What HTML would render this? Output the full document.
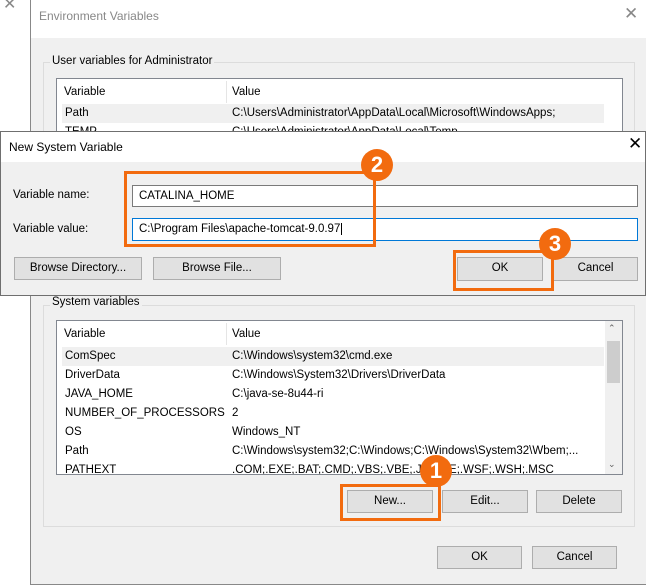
<!DOCTYPE html>
<html><head><meta charset="utf-8"><style>
*{box-sizing:border-box;margin:0;padding:0}
body{width:646px;height:585px;position:relative;overflow:hidden;background:#fff;font-family:"Liberation Sans",sans-serif;font-size:11.5px;color:#000}
.a{position:absolute}
.btn{position:absolute;background:#e1e1e1;border:1px solid #adadad;text-align:center;line-height:21px;font-size:11.5px}
.inp{position:absolute;background:#fff;border:1px solid #7a7a7a;padding-left:6px;line-height:20px;font-size:11.5px}
.orange{position:absolute;border:3px solid #f26b0f}
.circ{position:absolute;width:32px;height:32px;border-radius:50%;background:#f26b0f;color:#fff;font-weight:bold;font-size:22px;text-align:center;line-height:32px}
.row{position:absolute;left:0;width:549px;height:19px;line-height:19px}
.row span{position:absolute}
</style></head><body>
<div class="a" style="left:3px;top:-6px;font-size:16px;color:#888">✕</div>
<!-- outer dialog -->
<div class="a" style="left:30px;top:0;width:620px;height:585px;background:#f0f0f0;border-left:1px solid #888;border-bottom:1px solid #888"></div>
<div class="a" style="left:31px;top:0;width:615px;height:38px;background:#fff"></div>
<div class="a" style="left:39px;top:9px;color:#888;font-size:12px">Environment Variables</div>
<div class="a" style="left:624px;top:4px;color:#888;font-size:17px">✕</div>
<!-- user group -->
<div class="a" style="left:43px;top:62px;width:592px;height:100px;border:1px solid #dcdcdc"></div>
<div class="a" style="left:50px;top:55px;background:#f0f0f0;padding:0 2px;font-size:11.5px">User variables for Administrator</div>
<div class="a" style="left:56px;top:78px;width:567px;height:70px;background:#fff;border:1px solid #828790">
 <div class="a" style="left:7px;top:7px">Variable</div>
 <div class="a" style="left:169px;top:2px;width:1px;height:22px;background:#e5e5e5"></div>
 <div class="a" style="left:175px;top:7px">Value</div>
 <div class="a" style="left:5px;top:25px;width:542px;height:19px;background:#f0f0f0"></div>
 <div class="a" style="left:8px;top:28px">Path</div>
 <div class="a" style="left:175px;top:28px">C:\Users\Administrator\AppData\Local\Microsoft\WindowsApps;</div>
 <div class="a" style="left:8px;top:47px">TEMP</div>
 <div class="a" style="left:175px;top:47px">C:\Users\Administrator\AppData\Local\Temp</div>
</div>
<!-- system group -->
<div class="a" style="left:43px;top:305px;width:592px;height:222px;border:1px solid #dcdcdc"></div>
<div class="a" style="left:50px;top:296px;background:#f0f0f0;padding:0 2px">System variables</div>
<div class="a" style="left:56px;top:320px;width:567px;height:155px;background:#fff;border:1px solid #828790;overflow:hidden">
 <div class="a" style="left:7px;top:7px">Variable</div>
 <div class="a" style="left:169px;top:2px;width:1px;height:22px;background:#e5e5e5"></div>
 <div class="a" style="left:175px;top:7px">Value</div>
 <div class="row" style="top:26px;left:5px;width:542px;background:#f0f0f0"></div>
 <div class="row" style="top:26px"><span style="left:8px">ComSpec</span><span style="left:175px">C:\Windows\system32\cmd.exe</span></div>
 <div class="row" style="top:45px"><span style="left:8px">DriverData</span><span style="left:175px">C:\Windows\System32\Drivers\DriverData</span></div>
 <div class="row" style="top:64px"><span style="left:8px">JAVA_HOME</span><span style="left:175px">C:\java-se-8u44-ri</span></div>
 <div class="row" style="top:83px"><span style="left:8px">NUMBER_OF_PROCESSORS</span><span style="left:175px">2</span></div>
 <div class="row" style="top:102px"><span style="left:8px">OS</span><span style="left:175px">Windows_NT</span></div>
 <div class="row" style="top:121px"><span style="left:8px">Path</span><span style="left:175px">C:\Windows\system32;C:\Windows;C:\Windows\System32\Wbem;...</span></div>
 <div class="row" style="top:140px"><span style="left:8px">PATHEXT</span><span style="left:175px">.COM;.EXE;.BAT;.CMD;.VBS;.VBE;.JS;.JSE;.WSF;.WSH;.MSC</span></div>
 <div class="a" style="left:548px;top:0;width:17px;height:153px;background:#f0f0f0"></div>
 <div class="a" style="left:550px;top:20px;width:13px;height:42px;background:#cdcdcd"></div>
 <div class="a" style="left:551px;top:2px;font-size:9px;color:#606060">⌃</div>
 <div class="a" style="left:551px;top:138px;font-size:9px;color:#606060">⌄</div>
</div>
<div class="btn" style="left:347px;top:490px;width:86px;height:23px">New...</div>
<div class="btn" style="left:442px;top:490px;width:86px;height:23px">Edit...</div>
<div class="btn" style="left:536px;top:490px;width:86px;height:23px">Delete</div>
<div class="btn" style="left:437px;top:546px;width:85px;height:23px">OK</div>
<div class="btn" style="left:532px;top:546px;width:85px;height:23px">Cancel</div>
<div class="orange" style="left:340px;top:484px;width:101px;height:37px"></div>
<div class="circ" style="left:420px;top:455px">1</div>
<!-- new system variable dialog -->
<div class="a" style="left:0;top:131px;width:646px;height:165px;background:#f0f0f0;border:1px solid #6f6f6f"></div>
<div class="a" style="left:1px;top:132px;width:644px;height:30px;background:#fff"></div>
<div class="a" style="left:9px;top:140px;font-size:12px">New System Variable</div>
<div class="a" style="left:628px;top:134px;font-size:17px">✕</div>
<div class="a" style="left:13px;top:189px">Variable name:</div>
<div class="a" style="left:13px;top:223px">Variable value:</div>
<div class="inp" style="left:132px;top:185px;width:506px;height:22px">CATALINA_HOME</div>
<div class="inp" style="left:132px;top:218px;width:506px;height:23px;border-color:#0078d7">C:\Program Files\apache-tomcat-9.0.97<span style="border-left:1px solid #000;margin-left:1px"></span></div>
<div class="btn" style="left:14px;top:257px;width:128px;height:23px">Browse Directory...</div>
<div class="btn" style="left:153px;top:257px;width:128px;height:23px">Browse File...</div>
<div class="btn" style="left:457px;top:257px;width:86px;height:24px">OK</div>
<div class="btn" style="left:553px;top:257px;width:85px;height:24px">Cancel</div>
<div class="orange" style="left:124px;top:171px;width:252px;height:76px"></div>
<div class="orange" style="left:453px;top:250px;width:101px;height:41px"></div>
<div class="circ" style="left:361px;top:149px">2</div>
<div class="circ" style="left:539px;top:228px">3</div>
</body></html>
